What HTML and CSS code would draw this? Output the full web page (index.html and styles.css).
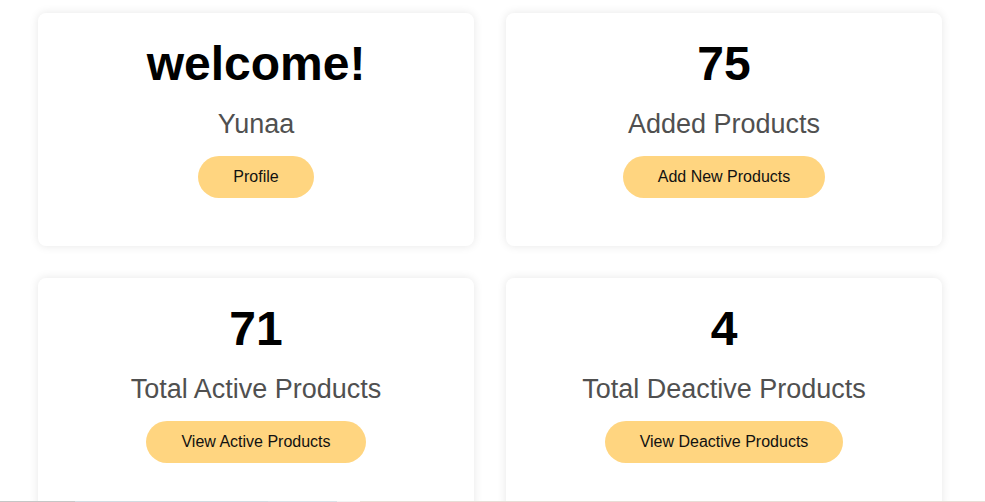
FILE: index.html
```html
<!DOCTYPE html>
<html lang="en">
<head>
<meta charset="utf-8">
<title>Dashboard</title>
<link rel="stylesheet" href="styles.css">
</head>
<body>
<main class="dashboard">
  <section class="card">
    <h1 class="card-title">welcome!</h1>
    <p class="card-label">Yunaa</p>
    <a class="card-btn" href="#">Profile</a>
  </section>
  <section class="card">
    <h1 class="card-title">75</h1>
    <p class="card-label">Added Products</p>
    <a class="card-btn" href="#">Add New Products</a>
  </section>
  <section class="card">
    <h1 class="card-title">71</h1>
    <p class="card-label">Total Active Products</p>
    <a class="card-btn" href="#">View Active Products</a>
  </section>
  <section class="card">
    <h1 class="card-title">4</h1>
    <p class="card-label">Total Deactive Products</p>
    <a class="card-btn" href="#">View Deactive Products</a>
  </section>
</main>
<div class="bottom-edge"></div>
</body>
</html>
```

FILE: styles.css
```css
* {
  box-sizing: border-box;
}

html, body {
  margin: 0;
  padding: 0;
  background: #ffffff;
  font-family: "Liberation Sans", Arial, sans-serif;
}

.dashboard {
  display: grid;
  grid-template-columns: 436px 436px;
  gap: 32px;
  padding: 13px 0 0 38px;
}

.card {
  background: #ffffff;
  border-radius: 8px;
  box-shadow: 0 0 10px rgba(0, 0, 0, 0.1);
  height: 233px;
  padding: 24px 20px 0;
  display: flex;
  flex-direction: column;
  align-items: center;
  text-align: center;
}

.card-title {
  margin: 0;
  font-size: 48px;
  line-height: 54px;
  font-weight: 700;
  color: #000000;
}

.card-label {
  margin: 17px 0 0;
  font-size: 27px;
  line-height: 32px;
  color: #505050;
}

.card-btn {
  margin-top: 16px;
  display: inline-block;
  height: 42px;
  line-height: 41px;
  padding: 0 35px;
  border-radius: 21px;
  background: #ffd580;
  color: #111111;
  font-size: 16px;
  text-decoration: none;
}

.bottom-edge {
  position: fixed;
  left: 0;
  right: 0;
  bottom: 0;
  height: 1px;
  background: linear-gradient(to right, #c6c6c6 0, #c6c6c6 75px, #d2dbe1 75px, #d2dbe1 268px, #d9e1e6 268px, #d9e1e6 337px, #f2f2f2 337px, #f2f2f2 360px, #e8ddd6 360px, #e8ddd6 100%);
}
```
